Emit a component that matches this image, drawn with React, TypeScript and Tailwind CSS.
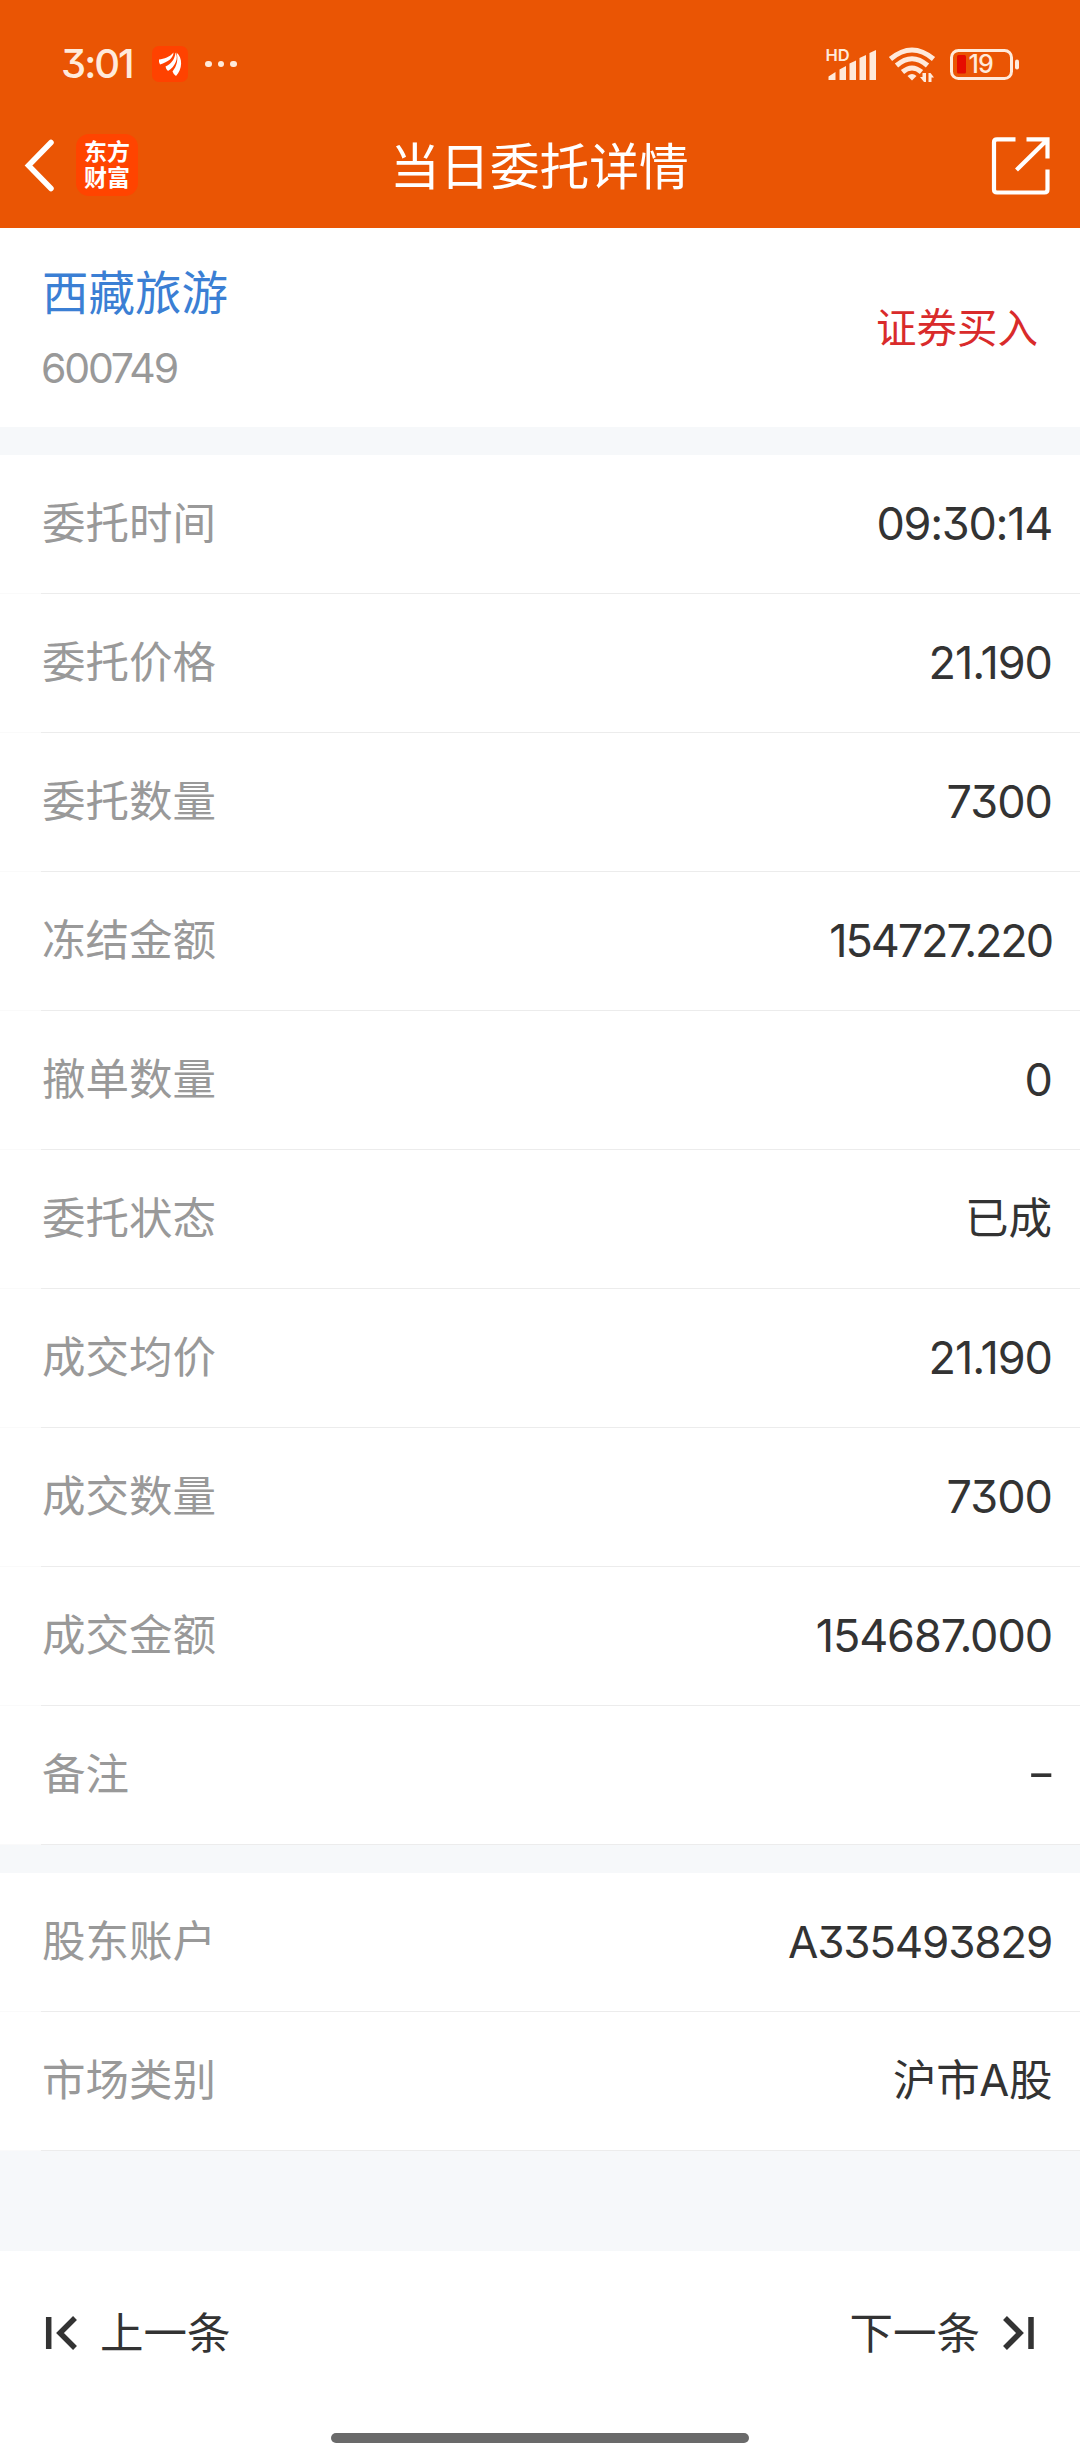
import { clsx } from 'clsx'

type Item = { label: string; value: string; style: string }

const orderItems: Item[] = [
  { label: '委托时间', value: '09:30:14', style: 'text-[45px] tracking-[-1.3px]' },
  { label: '委托价格', value: '21.190', style: 'text-[45px] tracking-[-1px]' },
  { label: '委托数量', value: '7300', style: 'text-[45px] tracking-[-1px]' },
  { label: '冻结金额', value: '154727.220', style: 'text-[45px] tracking-[-2.1px]' },
  { label: '撤单数量', value: '0', style: 'text-[45px] tracking-[-1px]' },
  { label: '委托状态', value: '已成', style: 'text-[43.5px]' },
  { label: '成交均价', value: '21.190', style: 'text-[45px] tracking-[-1px]' },
  { label: '成交数量', value: '7300', style: 'text-[45px] tracking-[-1px]' },
  { label: '成交金额', value: '154687.000', style: 'text-[45px] tracking-[-1.1px]' },
  { label: '备注', value: '-', style: 'text-[45px] pb-[5px] -mr-[4px] origin-right scale-x-140' },
]

const accountItems: Item[] = [
  { label: '股东账户', value: 'A335493829', style: 'text-[44px] tracking-[-1.2px]' },
  { label: '市场类别', value: '沪市A股', style: 'text-[43.5px] tracking-[-0.4px]' },
]

function StatusBar() {
  return (
    <div className="flex h-[128px] items-center justify-between pr-[60px] pl-[61px] text-[#ffeadb]">
      <div className="flex items-center">
        <span className="w-[91px] text-[40px] leading-none font-medium tracking-[-2px] [font-feature-settings:'cv09']">3:01</span>
        <svg className="h-[36px] w-[36px]" viewBox="0 0 36 36">
          <rect width="36" height="36" rx="7" fill="#ff4200" />
          <path d="M7 13.5C12 13 18 11 21.500 6.500C21.500 12 16 16 8 18.500Q6.500 16 7 13.500Z" fill="#fff" />
          <path d="M13.500 20.500C19 18 23 13 23.500 6.500C27 12 23 21 16 25Q14 23.500 13.500 20.500Z" fill="#fff" />
          <path d="M20.500 25.500C25 20 26.500 13 24.500 6.500C31 12 30.500 23 24 30Q21.500 28.500 20.500 25.500Z" fill="#fff" />
        </svg>
        <div className="ml-[17px] flex gap-[6px]">
          <i className="size-[6.5px] rounded-full bg-[#ffeadb]" />
          <i className="size-[6.5px] rounded-full bg-[#ffeadb]" />
          <i className="size-[6.5px] rounded-full bg-[#ffeadb]" />
        </div>
      </div>
      <div className="flex items-center">
        <svg className="h-[36px] w-[52px]" viewBox="0 0 52 36" fill="currentColor">
          <text x="-0.500" y="14.500" fontSize="16.500" fontWeight="600" fontFamily="Inter, sans-serif">HD</text>
          <path d="M2.500 34V30.500L9.500 26V34ZM13.500 34V23.500L20 20V34ZM23.500 34V17.500L30 14.500V34ZM33.500 34V12L40 9V34ZM43.500 34V7L50 4V34Z" />
        </svg>
        <svg className="ml-[10px] h-[36px] w-[48px]" viewBox="0 0 48 36" fill="none" stroke="currentColor" strokeWidth="5">
          <path d="M2.500 13Q24 -5 45.500 13" />
          <path d="M8.500 19.500Q24 6 39.500 19.500" />
          <path d="M14.500 26Q24 18 33.500 26" />
          <path d="M19.500 30Q24 26 28.500 30L24 34.500Z" fill="currentColor" stroke="none" />
          <path d="M38 27H34.500V31H32L36 36H38ZM40.500 36V27H42.500L46 31.500H43.500V36Z" fill="currentColor" stroke="none" />
        </svg>
        <svg className="ml-[14px] h-[36px] w-[70px]" viewBox="0 0 70 36">
          <rect x="1.500" y="4.500" width="60" height="28" rx="7" fill="none" stroke="currentColor" strokeWidth="3" />
          <rect x="7" y="9" width="9" height="18.500" rx="1.500" fill="#e60c00" />
          <text x="18.500" y="27.300" fontSize="25" fontWeight="500" letterSpacing="-1" fontFamily="Inter, sans-serif" fill="currentColor">19</text>
          <rect x="65" y="13.500" width="4" height="10" rx="2" fill="currentColor" />
        </svg>
      </div>
    </div>
  )
}

function TitleBar() {
  return (
    <div className="flex h-[100px] items-start justify-between pr-[30px] pl-[24px] text-white">
      <div className="flex w-[180px] items-center pt-[6px]">
        <svg className="h-[62px] w-[32px]" viewBox="0 0 32 62" fill="none" stroke="currentColor" strokeWidth="5.500">
          <path d="M27 8.500L4.500 31.500L27 54.500" strokeLinecap="round" />
        </svg>
        <div className="ml-[20px] flex size-[62px] flex-col items-center justify-center rounded-[13px] bg-[#ff4400] text-[23px] leading-[26px] font-bold">
          <span>东方</span>
          <span>财富</span>
        </div>
      </div>
      <h1 className="pt-[8px] pl-[5px] text-[49.8px] leading-[62px]">当日委托详情</h1>
      <div className="flex w-[180px] justify-end pt-[8px]">
        <svg className="h-[60px] w-[60px]" viewBox="0 0 60 60" fill="none" stroke="currentColor" strokeWidth="4.200">
          <path d="M25.500 3.300H7Q4 3.300 4 6.300V53.500Q4 56.500 7 56.500H54.500Q57.500 56.500 57.500 53.500V33.500" />
          <path d="M36.500 3.300H57.500V22.500M57 4L26.500 34" />
        </svg>
      </div>
    </div>
  )
}

function Row({ label, value, style }: Item) {
  return (
    <div className="bg-white">
      <div className="flex h-[138px] items-center justify-between pr-[28px] pl-[42px]">
        <span className="text-[43.5px] text-[#999]">{label}</span>
        <span className={clsx('text-[#333] [font-feature-settings:"cv09"]', style)}>{value}</span>
      </div>
      <div className="flex h-px bg-[#fafafa] pl-[41px]">
        <div className="flex-1 bg-[#ececec]" />
      </div>
    </div>
  )
}

function App() {
  return (
    <div className="flex h-[2460px] w-[1080px] flex-col overflow-hidden bg-[#f6f8fa] font-['Inter','Noto_Sans_CJK_SC',sans-serif]">
      <header className="bg-[#ea5504]">
        <StatusBar />
        <TitleBar />
      </header>

      <section className="flex h-[199px] items-center justify-between bg-white pr-[42px] pl-[42px]">
        <div className="flex flex-col pt-[7px]">
          <span className="text-[46.5px] leading-[70px] text-[#3b7fd4]">西藏旅游</span>
          <span className="-ml-px mt-[4px] text-[41px] leading-[72px] tracking-[-2.2px] text-[#999]">600749</span>
        </div>
        <span className="pt-[3px] text-[40.5px] text-[#d92b2b]">证券买入</span>
      </section>

      <section className="mt-[28px]">
        {orderItems.map((item) => (
          <Row key={item.label} {...item} />
        ))}
      </section>

      <section className="mt-[28px]">
        {accountItems.map((item) => (
          <Row key={item.label} {...item} />
        ))}
      </section>

      <footer className="mt-auto flex h-[209px] flex-col justify-between bg-white pb-[17px] text-[#333]">
        <div className="flex h-[164px] items-center justify-between pr-[41px] pl-[42px]">
          <button className="flex items-center gap-[20px]">
            <svg className="h-[36px] w-[38px]" viewBox="0 0 38 36" fill="none" stroke="currentColor" strokeWidth="5.500">
              <path d="M6.700 2V34M33 3L18 18L33 33" />
            </svg>
            <span className="pt-[2px] text-[43.5px]">上一条</span>
          </button>
          <button className="flex items-center gap-[21px]">
            <span className="pt-[2px] text-[43.5px]">下一条</span>
            <svg className="h-[36px] w-[38px]" viewBox="0 0 38 36" fill="none" stroke="currentColor" strokeWidth="5.500">
              <path d="M4 3L19 18L4 33M30 2V34" />
            </svg>
          </button>
        </div>
        <div className="h-[10px] w-[418px] self-center rounded-full bg-[#6a6a6a]" />
      </footer>
    </div>
  )
}

export default App
